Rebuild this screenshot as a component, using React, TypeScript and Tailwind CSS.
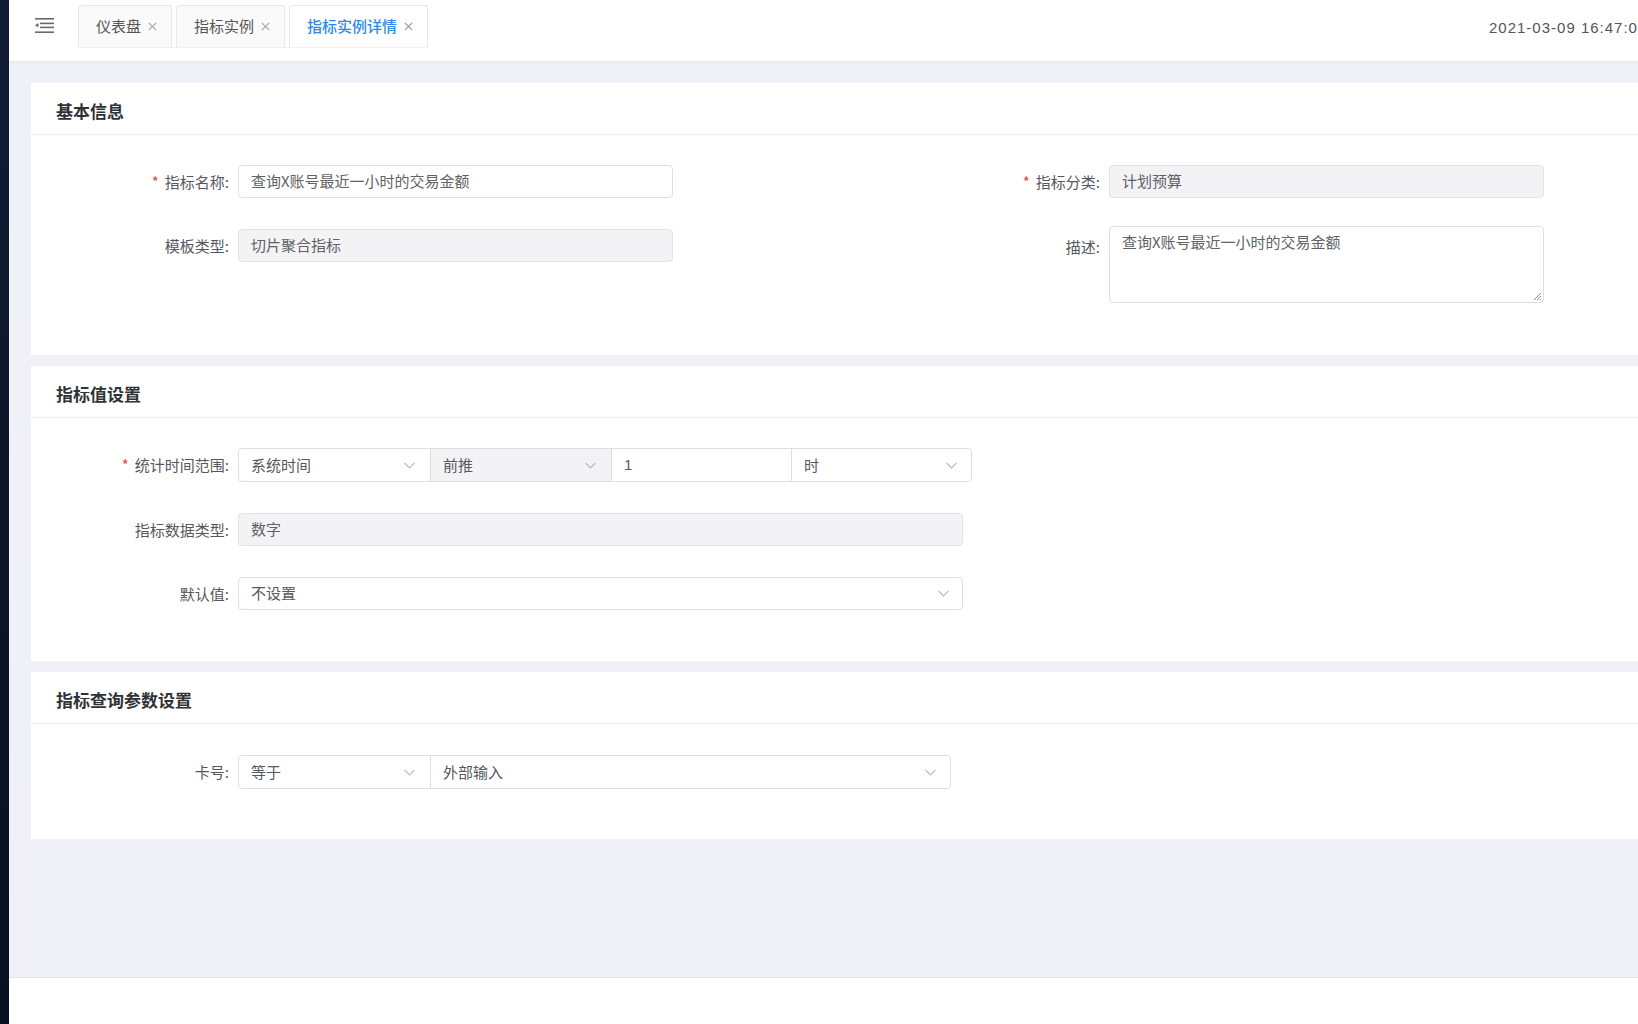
import React from 'react';

const font = "font-['Noto_Sans_CJK_SC','Noto_Sans',sans-serif]";

function Chevron() {
  return (
    <svg width="11" height="7" viewBox="0 0 11 7" className="shrink-0">
      <path d="M0.5 0.8 L5.5 6 L10.5 0.8" fill="none" stroke="#b4b8c0" strokeWidth="1.1" />
    </svg>
  );
}

function CloseX({ color = '#a0a3a8' }: { color?: string }) {
  return (
    <svg width="9" height="9" viewBox="0 0 9 9" className="shrink-0">
      <path d="M0.8 0.8 L8.2 8.2 M8.2 0.8 L0.8 8.2" stroke={color} strokeWidth="1.1" />
    </svg>
  );
}

function MenuFold() {
  return (
    <svg width="19" height="17" viewBox="0 0 19 17">
      <rect x="0" y="1" width="19" height="1.6" fill="#666a70" />
      <rect x="5" y="5.6" width="14" height="1.6" fill="#666a70" />
      <rect x="5" y="9.6" width="14" height="1.6" fill="#666a70" />
      <path d="M0 8.3 L3.4 6.1 L3.4 10.5 Z" fill="#666a70" />
      <rect x="0" y="14.4" width="19" height="1.6" fill="#666a70" />
    </svg>
  );
}

function Label({ text, required }: { text: string; required?: boolean }) {
  return (
    <div className="w-[207px] shrink-0 pr-[9px] text-right text-[15px] text-[#55585e] leading-[33px]">
      {required && <span className="text-[#e0484e] mr-[6px]">*</span>}
      {text}:
    </div>
  );
}

function Card({ title, children, bodyClass }: { title: string; children: React.ReactNode; bodyClass: string }) {
  return (
    <section className="bg-white">
      <div className="h-[52px] border-b border-[#ebedf2] flex items-center pl-[25px] pt-[5px]">
        <h2 className="text-[17px] font-semibold text-[#2f3236]">{title}</h2>
      </div>
      <div className={bodyClass}>{children}</div>
    </section>
  );
}

const tabs = [
  { name: '仪表盘', active: false },
  { name: '指标实例', active: false },
  { name: '指标实例详情', active: true },
];

export default function App() {
  return (
    <div className={`flex h-[1024px] w-[1638px] overflow-hidden bg-white ${font}`}>
      <div className="w-[9px] shrink-0 bg-gradient-to-b from-[#0f1c33] to-[#08111f] shadow-[1px_0_2px_rgba(0,0,0,0.25)]" />
      <div className="flex min-w-0 flex-1 flex-col">
        <header className="relative z-10 flex h-[61px] shrink-0 bg-white shadow-[0_1px_3px_rgba(0,0,0,0.06)]">
          <div className="flex w-[69px] shrink-0 justify-center pt-[17px] pl-[1px]">
            <MenuFold />
          </div>
          <div className="flex items-end gap-[4px] pt-[6px] h-[48px] border-b border-[#eef0f4]">
            {tabs.map((t) => (
              <div
                key={t.name}
                className={`flex h-[42px] items-center gap-[7px] rounded-t-[3px] border border-b-0 border-[#e6e8ee] pl-[17px] pr-[14px] text-[15px] ${
                  t.active ? 'bg-white text-[#2f8ae6] font-medium' : 'bg-[#fafafb] text-[#555]'
                }`}
              >
                <span>{t.name}</span>
                <CloseX color={t.active ? '#8f959c' : '#a0a3a8'} />
              </div>
            ))}
          </div>
          <div className="flex-1" />
          <div className="w-[149px] shrink-0 overflow-hidden whitespace-nowrap pt-[17px] font-['Liberation_Sans',sans-serif] text-[15px] tracking-[1px] text-[#555]">
            2021-03-09 16:47:04
          </div>
        </header>

        <main className="flex flex-1 flex-col gap-[11px] bg-[#f0f0f7] pl-[22px] pt-[22px]">
          <Card title="基本信息" bodyClass="flex pt-[30px] pb-[52px]">
            <div className="flex w-[871px] shrink-0 flex-col gap-[31px]">
              <div className="flex">
                <Label text="指标名称" required />
                <div className="flex h-[33px] w-[435px] items-center rounded-[4px] border border-[#dcdfe6] bg-white pl-[12px] text-[15px] text-[#606266]">
                  查询X账号最近一小时的交易金额
                </div>
              </div>
              <div className="flex">
                <Label text="模板类型" />
                <div className="flex h-[33px] w-[435px] items-center rounded-[4px] border border-[#e1e3e8] bg-[#f3f3f5] pl-[12px] text-[15px] text-[#606266]">
                  切片聚合指标
                </div>
              </div>
            </div>
            <div className="flex flex-col gap-[28px]">
              <div className="flex">
                <Label text="指标分类" required />
                <div className="flex h-[33px] w-[435px] items-center rounded-[4px] border border-[#e1e3e8] bg-[#f3f3f5] pl-[12px] text-[15px] text-[#606266]">
                  计划预算
                </div>
              </div>
              <div className="flex">
                <div className="w-[207px] shrink-0 pr-[9px] pt-[4px] text-right text-[15px] text-[#55585e] leading-[33px]">描述:</div>
                <div className="relative h-[77px] w-[435px] rounded-[4px] border border-[#dcdfe6] bg-white px-[12px] pt-[4px] text-[15px] leading-[22px] text-[#606266]">
                  查询X账号最近一小时的交易金额
                  <svg width="10" height="10" viewBox="0 0 10 10" className="absolute bottom-[1px] right-[1px]">
                    <path d="M9 2 L2 9 M9 5 L5 9 M9 8 L8 9" stroke="#8a8d92" strokeWidth="1" />
                  </svg>
                </div>
              </div>
            </div>
          </Card>

          <Card title="指标值设置" bodyClass="flex flex-col gap-[31px] pt-[30px] pb-[51px]">
            <div className="flex">
              <Label text="统计时间范围" required />
              <div className="flex h-[34px] items-stretch rounded-[4px] border border-[#dcdfe6] text-[15px] text-[#55585e]">
                <div className="flex w-[191px] items-center justify-between pl-[12px] pr-[15px]">
                  <span>系统时间</span>
                  <Chevron />
                </div>
                <div className="flex w-[181px] items-center justify-between border-l border-[#dcdfe6] bg-[#f3f3f5] pl-[12px] pr-[15px]">
                  <span>前推</span>
                  <Chevron />
                </div>
                <div className="flex w-[180px] items-center border-l border-[#dcdfe6] pl-[12px]">
                  <span className="font-['Liberation_Sans',sans-serif]">1</span>
                </div>
                <div className="flex w-[180px] items-center justify-between border-l border-[#dcdfe6] pl-[12px] pr-[14px]">
                  <span>时</span>
                  <Chevron />
                </div>
              </div>
            </div>
            <div className="flex">
              <Label text="指标数据类型" />
              <div className="flex h-[33px] w-[725px] items-center rounded-[4px] border border-[#e1e3e8] bg-[#f3f3f5] pl-[12px] text-[15px] text-[#606266]">
                数字
              </div>
            </div>
            <div className="flex">
              <Label text="默认值" />
              <div className="flex h-[33px] w-[725px] items-center justify-between rounded-[4px] border border-[#dcdfe6] bg-white pl-[12px] pr-[13px] text-[15px] text-[#55585e]">
                <span>不设置</span>
                <Chevron />
              </div>
            </div>
          </Card>

          <Card title="指标查询参数设置" bodyClass="flex pt-[31px] pb-[50px]">
            <Label text="卡号" />
            <div className="flex h-[34px] items-stretch rounded-[4px] border border-[#dcdfe6] text-[15px] text-[#55585e]">
              <div className="flex w-[191px] items-center justify-between pl-[12px] pr-[15px]">
                <span>等于</span>
                <Chevron />
              </div>
              <div className="flex w-[520px] items-center justify-between border-l border-[#dcdfe6] pl-[12px] pr-[14px]">
                <span>外部输入</span>
                <Chevron />
              </div>
            </div>
          </Card>
        </main>

        <footer className="h-[47px] shrink-0 border-t border-[#e4e5ea] bg-white" />
      </div>
    </div>
  );
}
